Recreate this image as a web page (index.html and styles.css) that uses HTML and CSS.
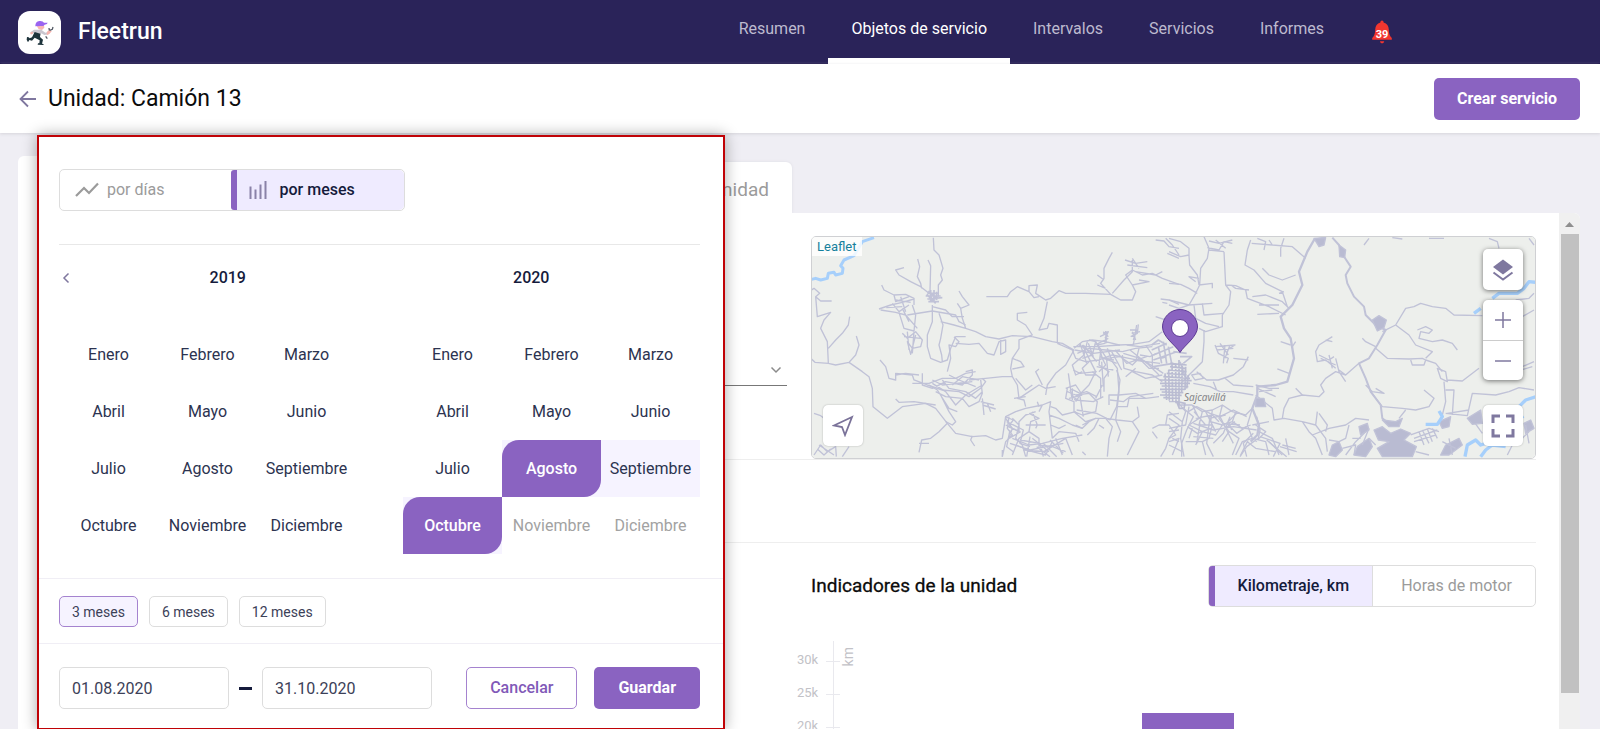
FILE: index.html
```html
<!DOCTYPE html>
<html lang="es">
<head>
<meta charset="utf-8">
<title>Fleetrun</title>
<meta name="viewport" content="width=device-width, initial-scale=1">
<link rel="stylesheet" href="styles.css">
</head>
<body>
<header class="topbar">
  <a class="brand" href="#">
    <span class="brand-logo">
      <svg viewBox="53 27 129 129" width="43" height="43" aria-hidden="true">
        <path d="M109 71l22-1 1 7-7 7-10-2z" fill="#f7b6b4"/>
        <path d="M105 72q0-13 12-15 11-1 14 5l11 0q0 4-9 6l-4 4q-12-1-24 1z" fill="#9a63f0"/>
        <path d="M90 91l11-8 22 0 12 9 8-2 1 7-12 2-9-5-4 9-14-2-3-9-7 3z" fill="#c9c6cf"/>
        <path d="M89 92l8-3 2 4-7 5zM140 89l8-6 6 5-7 8-8 4z" fill="#f5b3ae"/>
        <path d="M103 90l17 5-1 10 9 8-3 12 5 1-1 3-17-1 1-4 4 0 1-9-15-8-8 9-8-2-4 7-4-8 1-8 5 1 3 3 7-3z" fill="#1d333b"/>
        <path d="M147 85l-1-7M148 85l8-3 2-7M136 103l5 7" fill="none" stroke="#555b66" stroke-width="4"/>
      </svg>
    </span>
    <span class="brand-name">Fleetrun</span>
  </a>
  <nav class="nav">
    <a class="nav-item" href="#">Resumen</a>
    <a class="nav-item nav-item-active" href="#">Objetos de servicio</a>
    <a class="nav-item" href="#">Intervalos</a>
    <a class="nav-item" href="#">Servicios</a>
    <a class="nav-item" href="#">Informes</a>
  </nav>
  <button class="bell" type="button" aria-label="Notificaciones">
    <svg viewBox="0 0 22 24" width="22" height="24" aria-hidden="true">
      <path d="M11 0.500c1 0 1.600.8 1.600 2 3.400 1 5 3.500 5.200 7 .2 4 .6 6 3 8.500v1.800H1.200V18c2.400-2.500 2.800-4.500 3-8.500.2-3.500 1.800-6 5.200-7 0-1.200.6-2 1.600-2zM9 21.200h4.200c-.2 1.400-1 2.100-2.100 2.100S9.200 22.600 9 21.200z" fill="#f2362f"/>
    </svg>
    <span class="bell-count">39</span>
  </button>
</header>

<div class="titlebar">
  <a class="back" href="#" aria-label="Volver">
    <svg viewBox="0 0 18 18" width="18" height="18" aria-hidden="true"><path d="M17 9H2M9 1.500L1.500 9 9 16.500" fill="none" stroke="#7f779f" stroke-width="1.800"/></svg>
  </a>
  <h1 class="title">Unidad: Camión 13</h1>
  <button class="btn btn-primary btn-create" type="button">Crear servicio</button>
</div>

<main class="main">
  <div class="tabs">
    <span class="tab tab-current"></span>
    <a class="tab tab-last" href="#">unidad</a>
  </div>
  <div class="panel">
    <div class="content">
      <section class="row row-map">
        <button class="dropdown" type="button" aria-label="Desplegar">
          <svg viewBox="0 0 12 8" width="12" height="8" aria-hidden="true"><path d="M1.500 1.500L6 6l4.500-4.500" fill="none" stroke="#8b8b8b" stroke-width="1.500"/></svg>
        </button>
        <div class="map">
          <svg class="map-art" viewBox="0 0 723 221" preserveAspectRatio="xMidYMid slice" aria-hidden="true">
            <rect width="723" height="221" fill="#edefec"/>
            <g transform="translate(-13 -12) scale(.33333)" fill="none" stroke="#c0c2d7" stroke-width="4" stroke-linejoin="round">
              <path d="M30 165L50 160 65 165 85 160 88 145 105 142 110 150 130 145 132 130 125 122 135 105 165 92 190 50 225 38" stroke="#a6cffb" stroke-width="9"/>
              <path d="M30 200L45 190 62 205 50 215 65 228 98 228M50 215L55 275 95 262 75 285 65 310 85 350 88 415M88 370L110 345 130 325 148 300 152 275M30 395L48 412 88 415 110 420 150 412 170 390 180 360 172 333M150 412L190 440 210 455 220 490 222 545 265 580 310 545 380 535 410 550 445 595 470 625 520 635 560 632 590 645 610 640 620 575"/>
              <path d="M45 565L65 572 75 580M445 595L420 620 395 640 368 645 360 682M360 655L390 655M290 522L300 532 345 530 410 540M520 632L515 645 527 663M45 690L65 660 85 680 110 665 112 695M55 672L75 690 95 672M60 660L105 690M150 665L130 695"/>
              <path d="M403 38L405 75 420 90 432 130 425 150 430 165 418 180 418 215M356 102L362 125 355 155 365 175 368 190M387 105L395 122 393 200 400 230M315 128L290 135 300 150 335 170 365 185 390 205M248 180L255 195 285 210 320 208 345 220 345 240M285 210L290 230 330 215M240 252L275 240 310 232 345 222M245 255L290 262 320 270M262 248L310 245M280 235L300 260 330 240M300 262L315 310 345 318 350 270 340 240M310 250L330 290M320 270L355 310M325 270L400 258 470 270 480 290 500 300M290 225L335 232M305 215L320 260"/>
              <path d="M385 205L420 205M380 213L425 213M388 198L415 222M385 222L430 218M395 195L395 230M405 195L405 230M413 200L413 225M388 230L420 230M383 208L410 235" stroke-width="5"/>
              <path d="M400 240L400 290 385 330 385 365 395 400 425 412 445 405 455 370 470 335 500 335M420 265L432 300 425 340 420 360 428 390 430 410M425 290L465 300 500 310 530 320 560 335 600 342 640 332 700 335M480 198L490 215 510 240 485 250 475 235M485 250L490 280 500 310M400 245L440 255 460 275 495 275M310 325L325 340 350 320 370 345 365 365 340 370 325 350 335 388 350 330M315 335L365 340M325 320L330 375M345 320L340 385"/>
              <path d="M465 335L480 350 470 365 450 360 455 400 445 440M470 355L510 358 540 355 565 385 585 390 600 350 620 345 620 380 605 388 605 345M562 215L605 215 625 215 635 200 655 185 690 200 690 182 715 180 710 205 740 225 755 220 780 197 800 205 860 205 935 208M690 200L705 218 720 215M745 230L735 280 720 315 745 310 750 295 775 300 775 355M685 262L655 265 655 285 680 300 700 330 660 345 660 370 640 400 635 430 640 455 610 455 560 460 510 465"/>
              <path d="M700 335L760 350 790 355 825 375 800 420 770 445 745 480 740 510M775 355L820 375M640 400L665 410 675 425 640 432M640 455L655 480 660 520 690 500 720 480 740 490 770 485M720 432L710 440 730 480M650 460L680 495 700 480M243 405L260 425 270 460 290 465 290 445 340 450 345 465 385 480M290 450L320 445 360 450M340 475L390 475 430 460 470 460 500 445 530 440M385 480L430 495 480 500 510 515 545 490 560 470 550 460"/>
              <path d="M370 445L370 480 400 490 440 470 490 480 520 450 520 435 500 440M390 480L415 495 450 550 475 560M400 475L440 500 470 540 500 510 550 480M430 465L450 490 500 500 530 520 550 500M450 450L480 465 530 485M460 480L490 455 540 465M400 465L430 480 520 470M410 500L440 515 490 520 510 545 540 530 550 505 545 465M425 510L450 560 470 590 460 600 440 590M550 520L555 570M550 540L590 552M565 535L575 560M545 530L585 540"/>
              <path d="M940 82L930 100 915 130 915 160 905 175 935 208 965 225 1000 225 1010 200 1000 180 980 150 1000 135 1030 150 1060 145 1090 160 1140 178M895 150L915 165M895 180L920 190M978 105L1010 115 1045 110M1000 100L1020 130M985 120L1045 128M1000 105L1000 140 975 165 940 205M1010 140L1070 150 1090 140M1000 180L1050 170 1020 165M1070 45L1095 48 1110 65 1140 70M1100 40L1120 60 1140 90M1105 85L1140 100M1085 222L1110 225 1140 238M1090 232L1105 235M1070 275L1100 285"/>
              <path d="M825 370L850 350 880 345 920 350 960 360 1000 358 1050 350 1090 320M920 318L922 355M912 325L928 320 918 340M1018 298L1015 325 995 335M1000 320L1010 345M820 375L830 400 860 410 900 405 940 390 990 400 1040 410 1080 450M835 385L870 370 920 375 970 380 1010 370 1060 365M850 360L870 400 890 440 870 480 850 500 830 530M865 350L855 390 820 420 830 450 850 440M890 350L905 380 900 420 930 440 915 460 915 500"/>
              <path d="M840 360L885 385M850 400L880 390 890 350 870 345M900 365L910 400 945 405M925 370L940 410 955 430 960 500 955 545M870 410L850 430 860 450 890 450M880 440L905 460 905 520M900 440L920 420 910 400M970 390L975 430 1010 440 1060 450 1090 470M970 400L1000 420 1020 400 1050 430 1080 430M1000 440L1040 460 1090 450M960 510L1010 505 1040 520 1080 515M980 455L1010 430M890 520L910 480M1040 360L1060 390 1060 430M1020 370L1010 410"/>
              <path d="M805 490L800 520 825 530 825 560 850 570 890 560 895 530 870 505 830 510 805 500M800 490L830 480 850 510M810 520L850 510M820 490L820 525M825 560L860 590 890 580 920 580 955 585 1000 590 1020 575 1015 545M955 545L950 585M930 540L930 510 960 510M955 545L985 545 990 520 1040 520M1000 590L1020 620 1000 660 985 690M950 585L965 620 955 650M920 580L940 605 930 640 925 695M900 580L885 610 865 630M850 600L890 580M830 600L850 610 870 590"/>
              <path d="M620 575L650 560 680 550 730 540 755 530 750 560 755 600 760 640M630 575L625 610 640 630 620 650 610 695M640 580L660 600 650 640 670 660 680 695M620 600L660 620 660 590 680 570 710 560M690 565L720 580 695 590 690 620 720 640 720 670M680 600L740 600M700 560L715 600 710 610M730 540L720 560M750 570L780 580 820 600 850 610M755 600L780 610 800 600M640 640L690 660 730 655 790 640 850 630M650 660L700 680 740 690 760 650M720 660L760 665 800 680M690 620L660 640 640 690M760 640L780 620 830 625 840 650M735 680L800 640 820 690M770 640L790 690M700 640L750 680M620 580L640 610 630 640 665 620M715 530L720 545M830 560L790 570 770 550 755 545M655 520L675 525 680 545M645 520L680 515"/>
              <path d="M1060 610L1080 600 1110 600 1130 630 1110 640 1100 670 1085 695M1060 620L1075 640M1100 600L1105 570 1140 565M1110 620L1140 615M1120 640L1140 650M900 600L915 610M850 680L860 690M610 675L610 695"/>
            </g>
            <g transform="translate(357 -12) scale(.33333)" fill="none" stroke="#c0c2d7" stroke-width="4" stroke-linejoin="round">
              <path d="M0 80L35 95 60 90 60 70 35 50 0 40M60 92L62 120 85 150 90 180M105 35L120 70 115 100 95 130 92 180 80 205 60 240 30 250 0 240M115 68L150 75 165 50 190 55M120 75L165 80M120 48L150 55 190 45M140 45L170 70M90 160L60 155 80 170M0 175L35 178 60 190 85 205M90 180L130 175 130 190M0 225L60 240 130 235M75 240L80 280 110 295 150 305M100 235L105 270 165 265"/>
              <path d="M165 80L170 180 185 200 180 240 160 270 160 305 110 320 90 310M170 180L200 182 230 195 235 220 300 245 350 270M185 180L200 190 240 195M235 75L228 120 255 135 290 175 340 200 355 245M245 45L235 75M248 55L310 60 370 65 410 100M300 45L310 60M265 40L290 50 285 75M335 70L335 95M345 40L335 70M280 130L300 150 340 165 380 150M345 200L330 205M250 215L290 210 340 230 360 250M270 240L330 240M265 268L330 265"/>
              <path d="M470 38L435 45 415 80 390 140 400 180 370 240 335 275 345 310 365 340 375 400 355 470 320 480 265 485 265 510 250 550 270 600 265 630 245 650" stroke-width="7"/>
              <path d="M490 38L510 60 522 90 545 125 530 150 535 175 555 215 585 245 590 270 620 300 650 315 625 360 600 400 570 415 590 460 605 500 635 540 640 580 665 600" stroke-width="6"/>
              <path d="M435 40L470 38 465 60 450 65zM510 60L530 75 527 98 512 95zM610 285L630 272 652 285 645 308 625 318z" fill="#b9bbd2"/>
              <path d="M600 40L585 60M670 38L700 42M780 40L825 40M960 40L985 50 990 70M1080 40L1095 60M640 320L680 300 710 250 735 245 755 235 790 245 830 250 855 270 940 272M680 300L720 330 740 360 790 380 770 400M745 315L770 305 790 315 780 325 755 320 750 340 790 350 820 345 850 355 865 375M620 370L655 400 720 402 760 400 770 405 765 420 730 420 725 405M770 405L800 415 820 440M580 340L590 350 620 365M570 415L530 450 500 440 470 460 455 480 465 500 450 515 400 510 360 520 345 550 340 580M500 400L510 440 530 470M530 450L510 435"/>
              <path d="M490 335L450 360 440 380 445 410 470 405 500 430M470 345L490 350M450 390L480 405 495 395M455 400L500 420M480 390L490 430M380 350L370 365M335 350L365 360M325 432L360 445M380 490L400 510M805 430L830 440 835 470 815 460zM835 465L880 468 930 430M1060 425L1095 410M1040 440L1090 425M1060 275L1095 255M1040 225L1080 220 1095 205M825 470L830 530 820 570M830 495L855 495 850 570M830 565L895 572 910 505 980 510 1020 500 1050 488 1095 495M835 565L900 555M915 590L940 625"/>
              <path d="M590 480L610 500 645 505 620 490M605 500L640 545 700 550 740 555 780 545 795 520 765 495M710 555L690 580M445 560L440 600 470 640 475 680M440 600L400 590 345 580 315 585 310 550 260 510M400 590L420 620 440 640 460 690M450 565L475 600 470 620M430 630L480 610 530 600 560 580 600 585M540 600L530 640 510 650 480 645"/>
              <path d="M615 615L640 605 665 625 695 612 725 625 705 645 742 665 730 695 640 695 625 670 660 650 628 645zM640 585L680 590 700 580 690 605 660 605zM570 605L595 595 600 615 575 630zM895 580L935 555 940 595 910 598zM810 590L845 575 840 605 820 610zM565 665L600 640 610 665 590 695 555 690zM490 660L510 650 520 675 500 695 480 690zM830 660L870 640 880 660 840 690 815 690zM1065 595L1085 585 1095 610 1070 625zM260 520L285 520 290 545 260 545z" fill="#b9bbd2"/>
              <path d="M725 630L780 610 810 620M735 640L805 615M735 650L800 630M750 620L765 660M760 615L780 655M775 612L790 650M790 610L805 640M550 640L575 640M520 670L560 660 555 690M600 640L620 660M1040 610L1060 600M1080 620L1060 640 1030 660 1015 690M1070 600L1080 655M820 650L860 670M840 640L850 690M600 610L580 660M590 620L560 650 530 690M740 680L780 690"/>
              <path d="M770 598L805 598 820 575 810 558M915 265L935 250M970 220L990 205 1045 205 1065 190 1080 170 1100 172M1050 545L1070 525 1100 515M1055 570L1062 580M888 695L895 660 920 645 935 660 950 655M935 695L950 675 970 660 1010 665" stroke="#a6cffb" stroke-width="10"/>
              <path d="M105 315L105 350 100 410 60 450 40 470"/>
              <path d="M25 530L50 560 40 590 35 640 45 695M35 540L70 540 100 560 130 555 160 540 190 560 230 570 250 550M60 545L50 600 0 610M70 540L90 580 60 600 100 620 80 660M100 560L90 600 130 600 120 640 100 650M130 555L125 590 160 600 190 590 200 560M160 540L150 580 180 620 160 650M190 590L220 610 245 600M0 560L40 590M0 580L30 600 0 640M0 650L30 640 10 690M0 660L40 680M50 650L100 650 110 690M80 580L130 570 150 590M100 620L140 630 160 600M180 620L210 640 190 690M70 610L60 640M110 560L140 620M120 580L170 570M75 560L110 600M55 605L85 625 125 610M0 530L30 530M250 550L235 600 250 640M200 690L220 650 250 640 290 650 300 690M235 650L260 670 320 680M270 620L310 640 330 690M250 600L300 590M240 640L215 690M260 600L290 620 260 650M340 660L380 670M350 640L360 690M300 650L340 690M265 490L320 515M270 500L310 495M260 480L300 490 330 490"/>
            </g>
            <g transform="translate(168 -7) scale(.33333)" fill="none" stroke="#c0c2d7" stroke-width="4" stroke-linejoin="round">
              <path d="M705 345L715 370 745 385 740 400M705 350L765 345 740 360M720 340L745 375M735 345L730 400M750 345L735 385M710 360L760 355M805 380L790 410 760 435 715 450 680 450 650 425M760 385L805 390M635 435L660 430 670 445 645 450zM640 460L690 470 720 485 760 485 820 495M700 455L710 480M735 445L760 465 820 470"/>
              <path d="M280 350L350 350 420 345M285 360L340 370 420 360M300 340L320 400M310 345L350 395M325 340L340 380M350 340L380 385 420 380M360 320L380 310 375 340 350 345M370 305L385 320M345 345L385 325M365 395L370 470M380 390L385 440M350 410L400 420M360 380L410 400M395 365L425 420M405 360L440 400 500 380M440 345L480 350 540 340M450 300L470 300 460 330M455 310L480 305M470 285L460 345M430 370L480 385 520 410 550 430M450 360L500 400M460 390L540 400M480 375L510 380 530 370"/>
              <path d="M515 360L560 340M520 375L580 350M520 390L590 365M535 350L545 400M550 335L560 400M565 350L575 400M580 365L620 370M520 410L580 400M600 380L635 380 610 400M515 345L535 330 560 345M600 395L615 440M540 385L560 380" stroke-width="5"/>
              <path d="M570 400L620 405M570 410L615 415M565 420L620 425M560 430L620 435M550 440L630 445M540 450L635 452M540 460L630 460M545 468L625 470M540 478L615 478M545 486L610 488M540 495L605 496M550 503L600 505M555 430L560 510M566 420L568 512M576 400L578 515M587 400L588 520M597 390L597 530M607 400L605 490M617 410L615 480M625 435L620 475M590 515L615 520 612 535 598 535z" stroke="#babcd2" stroke-width="5"/>
              <path d="M280 420L300 430 350 425M270 480L285 510 340 515 370 500M265 430L275 500 295 510M270 475L300 490 320 485 350 500M300 500L310 560M290 540L350 550 390 570M410 420L420 450 410 530 390 570M390 510L430 515 450 500 520 490M75 560L100 570 85 590 110 600M80 575L130 600 120 640 150 650M90 640L150 660 200 650 250 640M120 630L180 640 190 680M150 620L140 680M170 650L210 680M190 640L230 680M210 630L250 670M130 660L200 665M90 600L80 650 100 665"/>
              <path d="M610 535L640 560 620 600 605 640 605 680M625 545L650 530 690 550 720 560 760 540 800 560M640 580L700 600 760 590 830 600M720 560L740 600 760 640M750 560L730 610 700 640M770 550L740 580 770 610 800 590M640 620L700 625M660 580L650 640M690 560L680 640 700 680M830 560L840 600 835 625 800 650 780 680M820 610L790 640 800 680M840 620L900 640 880 680M900 650L950 665M860 630L920 680M730 580L780 585M745 570L755 600M735 595L765 575"/>
            </g>
            <text class="map-label" x="372" y="164">Sajcavillá</text>
            <path d="M368 115.500c-4-7-17.500-15.500-17.500-25.500a17.500 17.500 0 0 1 35 0C385.500 100 372 108.500 368 115.500z" fill="#8a63c1" stroke="#5d3b94" stroke-width="1"/>
            <circle cx="368" cy="91" r="8.500" fill="#fff" stroke="#5d3b94" stroke-width="1"/>
          </svg>
          <a class="map-credit" href="#">Leaflet</a>
          <button class="map-btn map-locate" type="button" aria-label="Ubicar">
            <svg viewBox="0 0 22 22" width="22" height="22" aria-hidden="true"><path d="M20 2L2 10.500l8 1.500 3 8z" fill="none" stroke="#7a7299" stroke-width="1.800"/></svg>
          </button>
          <div class="map-tools">
            <button class="map-btn" type="button" aria-label="Capas">
              <svg viewBox="0 0 22 22" width="22" height="22" aria-hidden="true"><path d="M11 0.500L21 8 11 15.500 1 8z" fill="#7f789f"/><path d="M1.500 13.500L11 20.500l9.500-7" fill="none" stroke="#7f789f" stroke-width="2"/></svg>
            </button>
            <div class="map-zoom">
              <button type="button" aria-label="Acercar"><svg viewBox="0 0 16 16" width="16" height="16" aria-hidden="true"><path d="M0 8h16M8 0v16" stroke="#7f789f" stroke-width="1.500"/></svg></button>
              <button type="button" aria-label="Alejar"><svg viewBox="0 0 16 16" width="16" height="16" aria-hidden="true"><path d="M0 8h16" stroke="#7f789f" stroke-width="1.500"/></svg></button>
            </div>
            <button class="map-btn map-full" type="button" aria-label="Pantalla completa">
              <svg viewBox="0 0 24 24" width="24" height="24" aria-hidden="true"><path d="M2 9V2h7M15 2h7v7M22 15v7h-7M9 22H2v-7" fill="none" stroke="#7f789f" stroke-width="3"/></svg>
            </button>
          </div>
        </div>
      </section>
      <section class="row row-empty"></section>
      <section class="row row-chart">
        <div class="chart-block">
          <div class="chart-head">
            <h2 class="chart-title">Indicadores de la unidad</h2>
            <div class="segment">
              <button class="segment-item segment-active" type="button">Kilometraje, km</button>
              <button class="segment-item segment-off" type="button">Horas de motor</button>
            </div>
          </div>
          <div class="chart">
            <div class="scale"><span>30k</span><span>25k</span><span>20k</span></div>
            <div class="axis"><i></i><i></i><i></i></div>
            <span class="axis-name">km</span>
            <div class="plot"><div class="bar"></div></div>
          </div>
        </div>
      </section>
    </div>
    <div class="scroll" aria-hidden="true">
      <svg viewBox="0 0 21 21" width="21" height="21"><path d="M6 14l4.500-5 4.500 5z" fill="#8f8f8f"/></svg>
      <div class="scroll-thumb"></div>
    </div>
  </div>

  <form class="popup">
    <div class="popup-body">
      <div class="mode">
        <button class="mode-item" type="button">
          <svg viewBox="0 0 24 16" width="24" height="16" aria-hidden="true"><path d="M1 14l8-8 5 5 9-9.500" fill="none" stroke="#9b9b9b" stroke-width="2.200"/></svg>
          por días
        </button>
        <button class="mode-item mode-active" type="button">
          <svg viewBox="0 0 18 20" width="18" height="20" aria-hidden="true"><path d="M1.500 6.500V19M6.500 9.500V19M11.500 4.500V19M16.500 1v18" stroke="#8a82a8" stroke-width="2"/></svg>
          por meses
        </button>
      </div>
      <div class="years">
        <button class="prev" type="button" aria-label="Anterior"><svg viewBox="0 0 8 12" width="8" height="12" aria-hidden="true"><path d="M6.500 1.500L2 6l4.500 4.500" fill="none" stroke="#7f779f" stroke-width="1.500"/></svg></button>
        <span>2019</span><span>2020</span>
      </div>
      <div class="calendars">
        <div class="months">
          <button type="button">Enero</button><button type="button">Febrero</button><button type="button">Marzo</button>
          <button type="button">Abril</button><button type="button">Mayo</button><button type="button">Junio</button>
          <button type="button">Julio</button><button type="button">Agosto</button><button type="button">Septiembre</button>
          <button type="button">Octubre</button><button type="button">Noviembre</button><button type="button">Diciembre</button>
        </div>
        <div class="months">
          <button type="button">Enero</button><button type="button">Febrero</button><button type="button">Marzo</button>
          <button type="button">Abril</button><button type="button">Mayo</button><button type="button">Junio</button>
          <button type="button">Julio</button><span class="in-range"><button class="month-end" type="button">Agosto</button></span><button class="in-range" type="button">Septiembre</button>
          <span class="in-range"><button class="month-end" type="button">Octubre</button></span><button type="button" disabled>Noviembre</button><button type="button" disabled>Diciembre</button>
        </div>
      </div>
    </div>
    <div class="presets">
      <button class="preset preset-active" type="button">3 meses</button>
      <button class="preset" type="button">6 meses</button>
      <button class="preset" type="button">12 meses</button>
    </div>
    <div class="popup-foot">
      <input class="date" type="text" value="01.08.2020" aria-label="Desde">
      <span class="dash"></span>
      <input class="date" type="text" value="31.10.2020" aria-label="Hasta">
      <button class="btn btn-outline" type="button">Cancelar</button>
      <button class="btn btn-primary btn-save" type="button">Guardar</button>
    </div>
  </form>
</main>
</body>
</html>
```
FILE: styles.css
```css
* { box-sizing: border-box; }

body {
  margin: 0;
  height: 100vh;
  display: flex;
  flex-direction: column;
  overflow: hidden;
  background: #efeef4;
  color: #151b3c;
  font: 16px/20px Roboto, sans-serif;
}

button, input {
  font: inherit;
  color: inherit;
  margin: 0;
  padding: 0;
  border: 0;
  background: none;
}

button { cursor: pointer; }
svg { display: block; flex: none; }
a { color: inherit; text-decoration: none; }

/* Top bar */
.topbar {
  flex: none;
  display: flex;
  height: 64px;
  padding: 0 207px 0 18px;
  background: #2a2359;
  box-shadow: inset 0 -1px #100740;
}

.brand {
  display: flex;
  align-items: center;
  gap: 17px;
  margin-right: auto;
  color: #fff;
}

.brand-logo {
  overflow: hidden;
  border-radius: 12px;
  background: #fff;
}

.brand-name { font-size: 23px; font-weight: 500; line-height: 28px; }

.nav { display: flex; }

.nav-item {
  padding: 19px 23px 0;
  color: #bdbacf;
}

.nav-item-active {
  color: #fff;
  border-bottom: 6px solid #fff;
}

.bell {
  position: relative;
  align-self: center;
  margin-left: 24px;
}

.bell-count {
  position: absolute;
  inset: 6px 0 0;
  color: #fff;
  font-size: 11px;
  font-weight: 700;
  line-height: 18px;
  text-align: center;
}

/* Title bar */
.titlebar {
  flex: none;
  display: flex;
  align-items: center;
  height: 69px;
  padding: 0 20px 0 19px;
  background: #fff;
  box-shadow: 0 1px 3px #d5d4da;
}

.title {
  margin: 0 auto 0 11px;
  color: #0b0b0b;
  font-size: 23px;
  font-weight: 400;
  line-height: 32px;
}

.btn {
  height: 42px;
  border-radius: 5px;
  font-weight: 500;
}

.btn-primary { background: #8a63c1; color: #fff; font-weight: 700; }
.btn-create { padding: 0 23px; }
.btn-outline { padding: 0 23px; border: 1px solid #a583cf; color: #8159b8; }
.btn-save { padding: 0 24px; }

/* Page */
.main {
  position: relative;
  flex: 1;
  min-height: 0;
  display: flex;
  flex-direction: column;
  padding: 23px 20px 0 18px;
}

.tabs { display: flex; align-items: flex-end; }

.tab { border-radius: 6px 6px 0 0; background: #fff; }

.tab-current { width: 300px; height: 57px; }

.tab-last {
  width: 474px;
  height: 51px;
  padding: 16px 23px 0;
  color: #9b9b9b;
  font-size: 19px;
  line-height: 24px;
  text-align: right;
  box-shadow: 0 0 3px #dddce3;
}

.panel {
  position: relative;
  flex: 1;
  min-height: 0;
  display: flex;
  overflow: hidden;
  border-radius: 0 6px 0 0;
  background: #fff;
}

.content { flex: 1; padding: 23px 23px 0 44px; }

.row { border-bottom: 1px solid #eee; }

.row-map {
  display: grid;
  grid-template-columns: 1fr 1fr;
  gap: 24px;
}

.dropdown {
  display: flex;
  justify-content: flex-end;
  align-items: flex-end;
  height: 150px;
  padding: 0 5px 11px;
  border-bottom: 1px solid #777;
}

.map {
  position: relative;
  height: 223px;
  overflow: hidden;
  border: 1px solid #cfd0d3;
  border-radius: 5px;
}

.map-art { width: 100%; height: 100%; }

.map-label {
  fill: #858589;
  stroke: #edefec;
  stroke-width: 2px;
  paint-order: stroke;
  font: italic 10px "Noto Sans", sans-serif;
}

.map-credit {
  position: absolute;
  top: 0;
  left: 0;
  padding: 0 5px;
  background: #fffc;
  color: #16809c;
  font-size: 13px;
  line-height: 19px;
}

.map-btn, .map-zoom {
  display: grid;
  place-items: center;
  width: 40px;
  border-radius: 5px;
  background: #fff;
  box-shadow: 0 1px 5px #0008;
}

.map-btn { height: 41px; }

.map-locate, .map-full { box-shadow: 0 0 2px #0004; }

.map-locate { position: absolute; left: 11px; bottom: 12px; }

.map-tools {
  position: absolute;
  top: 12px;
  right: 12px;
  bottom: 12px;
  display: flex;
  flex-direction: column;
  gap: 10px;
}

.map-zoom button {
  display: grid;
  place-items: center;
  width: 40px;
  height: 40px;
}

.map-zoom button + button { border-top: 1px solid #ccc; }

.map-full { margin-top: auto; }

.row-empty { height: 83px; }

.row-chart {
  display: grid;
  grid-template-columns: 1fr 1fr;
  gap: 24px;
  padding-top: 22px;
}

.chart-block { grid-column: 2; }

.chart-head {
  display: flex;
  justify-content: space-between;
  align-items: center;
}

.chart-title {
  margin: 0;
  color: #0b0b0b;
  font-size: 19px;
  font-weight: 400;
  line-height: 24px;
  -webkit-text-stroke: 0.3px;
}

.segment {
  display: flex;
  height: 42px;
  border: 1px solid #ddd;
  border-radius: 5px;
}

.segment-item { padding: 0 23px 0 28px; }

.segment-active {
  padding: 0 23px;
  border-left: 6px solid #8a63c1;
  border-right: 1px solid #ddd;
  border-radius: 3px 0 0 3px;
  background: #efebff;
  font-weight: 500;
}

.segment-off { color: #9b9b9b; }

.chart {
  display: flex;
  align-items: flex-start;
  height: 122px;
  padding-top: 34px;
}

.scale {
  display: flex;
  flex-direction: column;
  gap: 13px;
  margin: 9px 8px 0 -14px;
  color: #c2c2c7;
  font-size: 13px;
}

.axis {
  display: flex;
  flex-direction: column;
  gap: 32px;
  width: 14px;
  height: 88px;
  padding-top: 20px;
  background: linear-gradient(#e9e9ee, #e9e9ee) 7px 0 / 1px 100% no-repeat;
}

.axis i { flex: none; height: 1px; background: #e9e9ee; }

.axis-name {
  margin-top: 6px;
  color: #c2c2c7;
  font-size: 14px;
  line-height: 16px;
  writing-mode: vertical-rl;
  rotate: 180deg;
}

.plot { flex: 1; padding-top: 72px; }

.bar {
  width: 92px;
  height: 40px;
  margin-left: 42%;
  background: #8a63c1;
}

.scroll { flex: none; width: 21px; background: #f0f0f0; }

.scroll-thumb { height: 459px; margin: 0 1px 0 2px; background: #c1c1c1; }

/* Period popup */
.popup {
  position: absolute;
  top: 2px;
  left: 37px;
  width: 688px;
  border: 2px solid #c00206;
  background: #fff;
  box-shadow: 0 0 14px #0005;
}

.popup-body { padding: 32px 23px 23px 20px; }

.mode {
  display: flex;
  width: 346px;
  height: 42px;
  margin-bottom: 33px;
  border: 1px solid #ddd;
  border-radius: 5px;
}

.mode-item {
  flex: 1;
  display: flex;
  align-items: center;
  gap: 8px;
  padding-left: 15px;
  color: #9b9b9b;
}

.mode-active {
  gap: 13px;
  padding-left: 12px;
  border-left: 6px solid #8a63c1;
  border-radius: 3px 5px 5px 3px;
  background: #efebff;
  color: #151b3c;
  font-weight: 500;
}

.years {
  display: grid;
  grid-template-columns: 17px 1fr 1fr;
  align-items: center;
  padding: 23px 17px 38px 0;
  border-top: 1px solid #e8e8e8;
  font-weight: 500;
  text-align: center;
}

.prev { padding-left: 3px; }

.calendars { display: grid; grid-template-columns: 1fr 1fr; gap: 47px; }

.months {
  display: grid;
  grid-template-columns: repeat(3, 1fr);
  grid-auto-rows: 57px;
  color: #2c3350;
}

.in-range { display: grid; background: #f6f3ff; }

button.in-range { place-items: center; }

.months button:disabled { color: #a2a2a2; }

.month-end {
  border-radius: 17px 0;
  background: #8a63c1;
  color: #fff;
  font-weight: 500;
}

.presets {
  display: flex;
  gap: 11px;
  margin-top: 1px;
  padding: 17px 20px 16px;
  border: solid #f0eef5;
  border-width: 1px 0;
}

.preset {
  height: 31px;
  padding: 0 12px;
  border: 1px solid #ddd;
  border-radius: 5px;
  color: #3c4158;
  font-size: 14px;
}

.preset-active { border-color: #a583cf; background: #f6f3ff; }

.popup-foot {
  display: flex;
  align-items: center;
  padding: 23px 23px 19px 20px;
}

.date {
  width: 170px;
  height: 42px;
  padding: 0 12px;
  border: 1px solid #ddd;
  border-radius: 5px;
  color: #3c4158;
}

.dash { width: 13px; height: 3px; margin: 0 10px; background: #151b3c; }

.btn-outline { margin: 0 17px 0 auto; }
```
